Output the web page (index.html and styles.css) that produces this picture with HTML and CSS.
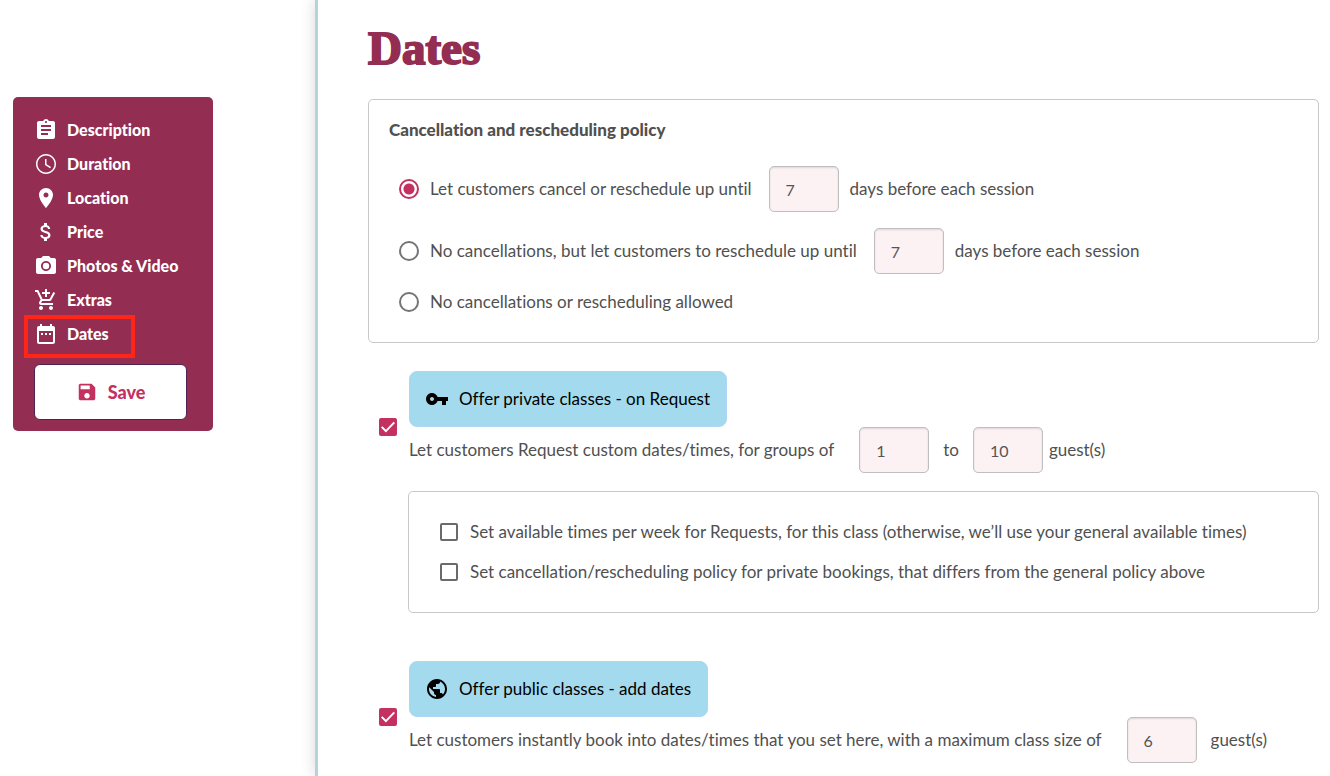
FILE: index.html
```html
<!DOCTYPE html>
<html lang="en">
<head>
    <meta charset="UTF-8">
    <meta name="viewport" content="width=device-width, initial-scale=1.0">
    <title>Dates</title>
    <link rel="stylesheet" href="styles.css">
</head>
<body>
    <aside class="sidebar">
        <nav class="menu">
            <a class="menu-item" href="#description">
                <svg class="icon" viewBox="0 0 24 24"><path d="M19 3h-4.18C14.4 1.84 13.3 1 12 1s-2.4.84-2.82 2H5c-1.1 0-2 .9-2 2v14c0 1.1.9 2 2 2h14c1.1 0 2-.9 2-2V5c0-1.1-.9-2-2-2zm-7 0c.55 0 1 .45 1 1s-.45 1-1 1-1-.45-1-1 .45-1 1-1zm2 14H7v-2h7v2zm3-4H7v-2h10v2zm0-4H7V7h10v2z"/></svg>
                Description
            </a>
            <a class="menu-item" href="#duration">
                <svg class="icon" viewBox="0 0 24 24"><path d="M12 2C6.5 2 2 6.5 2 12s4.5 10 10 10 10-4.5 10-10S17.5 2 12 2zm0 18.5c-4.7 0-8.5-3.8-8.5-8.5S7.3 3.500 12 3.500s8.500 3.800 8.500 8.500-3.800 8.500-8.500 8.500zM12.500 7H11v6l5.200 3.200.8-1.300-4.500-2.700V7z"/></svg>
                Duration
            </a>
            <a class="menu-item" href="#location">
                <svg class="icon" viewBox="0 0 24 24"><path d="M12 2C8.130 2 5 5.130 5 9c0 5.250 7 13 7 13s7-7.750 7-13c0-3.870-3.130-7-7-7zm0 9.500c-1.380 0-2.500-1.120-2.500-2.500s1.120-2.500 2.500-2.500 2.500 1.120 2.500 2.500-1.120 2.500-2.500 2.500z"/></svg>
                Location
            </a>
            <a class="menu-item" href="#price">
                <svg class="icon" viewBox="0 0 24 24"><path d="M11.800 10.900c-2.270-.59-3-1.200-3-2.150 0-1.090 1.010-1.850 2.700-1.850 1.780 0 2.440.85 2.500 2.100h2.210c-.07-1.720-1.120-3.300-3.210-3.810V3h-3v2.160c-1.940.42-3.500 1.680-3.500 3.610 0 2.310 1.910 3.460 4.700 4.130 2.500.6 3 1.480 3 2.410 0 .69-.49 1.790-2.700 1.790-2.060 0-2.870-.92-2.980-2.100h-2.200c.12 2.190 1.760 3.420 3.680 3.830V21h3v-2.150c1.950-.37 3.500-1.500 3.500-3.550 0-2.840-2.430-3.810-4.700-4.400z"/></svg>
                Price
            </a>
            <a class="menu-item" href="#photos">
                <svg class="icon" viewBox="0 0 24 24"><circle cx="12" cy="12" r="3.200"/><path d="M9 2L7.170 4H4c-1.100 0-2 .9-2 2v12c0 1.100.9 2 2 2h16c1.100 0 2-.9 2-2V6c0-1.100-.9-2-2-2h-3.170L15 2H9zm3 15c-2.760 0-5-2.240-5-5s2.240-5 5-5 5 2.240 5 5-2.240 5-5 5z"/></svg>
                Photos &amp; Video
            </a>
            <a class="menu-item" href="#extras">
                <svg class="icon" viewBox="0 0 24 24"><path d="M11 9h2V6h3V4h-3V1h-2v3H8v2h3v3zm-4 9c-1.100 0-1.990.9-1.990 2S5.900 22 7 22s2-.9 2-2-.9-2-2-2zm10 0c-1.100 0-1.990.9-1.990 2s.89 2 1.990 2 2-.9 2-2-.9-2-2-2zm-9.830-3.250l.03-.12.9-1.630h7.450c.75 0 1.410-.41 1.750-1.030l3.860-7.010L19.420 4h-.01l-1.100 2-2.760 5H8.530l-.13-.27L6.160 6l-.95-2-.94-2H1v2h2l3.600 7.590-1.350 2.450c-.16.28-.25.61-.25.96 0 1.100.9 2 2 2h12v-2H7.420c-.13 0-.25-.11-.25-.25z"/></svg>
                Extras
            </a>
            <a class="menu-item current" href="#dates">
                <svg class="icon" viewBox="0 0 24 24"><path d="M9 11H7v2h2v-2zm4 0h-2v2h2v-2zm4 0h-2v2h2v-2zm2-7h-1V2h-2v2H8V2H6v2H5c-1.110 0-1.990.9-1.990 2L3 20c0 1.100.89 2 2 2h14c1.100 0 2-.9 2-2V6c0-1.100-.9-2-2-2zm0 16H5V9h14v11z"/></svg>
                Dates
            </a>
            <button class="save" type="submit" form="datesForm">
                <svg class="icon" viewBox="0 0 24 24"><path d="M17 3H5c-1.110 0-2 .9-2 2v14c0 1.100.89 2 2 2h14c1.100 0 2-.9 2-2V7l-4-4zm-5 16c-1.660 0-3-1.340-3-3s1.340-3 3-3 3 1.340 3 3-1.340 3-3 3zm3-10H5V5h10v4z"/></svg>
                Save
            </button>
        </nav>
    </aside>

    <main>
        <h1>Dates</h1>

        <form id="datesForm">
            <section class="card policy">
                <h2>Cancellation and rescheduling policy</h2>
                <div class="choice">
                    <input type="radio" name="policy" id="policyCancel" checked>
                    <label for="policyCancel">Let customers cancel or reschedule up until</label>
                    <input type="text" class="number" id="cancelDays" value="7" inputmode="numeric" aria-label="Days before session to cancel">
                    <label for="cancelDays">days before each session</label>
                </div>
                <div class="choice">
                    <input type="radio" name="policy" id="policyReschedule">
                    <label for="policyReschedule">No cancellations, but let customers to reschedule up until</label>
                    <input type="text" class="number" id="rescheduleDays" value="7" inputmode="numeric" aria-label="Days before session to reschedule">
                    <label for="rescheduleDays">days before each session</label>
                </div>
                <div class="choice">
                    <input type="radio" name="policy" id="policyNone">
                    <label for="policyNone">No cancellations or rescheduling allowed</label>
                </div>
            </section>

            <section class="offer">
                <input type="checkbox" id="offerPrivate" checked>
                <div class="offer-body">
                    <label class="offer-title" for="offerPrivate">
                        <svg class="icon" viewBox="0 0 24 24"><path d="M12.650 10C11.830 7.670 9.610 6 7 6c-3.310 0-6 2.690-6 6s2.690 6 6 6c2.610 0 4.830-1.670 5.650-4H17v4h4v-4h2v-4H12.650zM7 14c-1.100 0-2-.9-2-2s.9-2 2-2 2 .9 2 2-.9 2-2 2z"/></svg>
                        Offer private classes - on Request
                    </label>
                    <div class="guests">
                        <label for="minGuests">Let customers Request custom dates/times, for groups of</label>
                        <input type="text" class="number" id="minGuests" value="1" inputmode="numeric">
                        <label for="maxGuests">to</label>
                        <input type="text" class="number" id="maxGuests" value="10" inputmode="numeric">
                        <span class="unit">guest(s)</span>
                    </div>
                </div>
            </section>

            <section class="card request-options">
                <div class="choice">
                    <input type="checkbox" id="weeklyTimes">
                    <label for="weeklyTimes">Set available times per week for Requests, for this class (otherwise, we’ll use your general available times)</label>
                </div>
                <div class="choice">
                    <input type="checkbox" id="privatePolicy">
                    <label for="privatePolicy">Set cancellation/rescheduling policy for private bookings, that differs from the general policy above</label>
                </div>
            </section>

            <section class="offer">
                <input type="checkbox" id="offerPublic" checked>
                <div class="offer-body">
                    <label class="offer-title" for="offerPublic">
                        <svg class="icon" viewBox="0 0 24 24"><path d="M12 2C6.480 2 2 6.480 2 12s4.480 10 10 10 10-4.480 10-10S17.520 2 12 2zm-1 17.930c-3.950-.49-7-3.850-7-7.930 0-.62.08-1.210.21-1.790L9 15v1c0 1.100.9 2 2 2v1.930zm6.900-2.540c-.26-.81-1-1.390-1.900-1.390h-1v-3c0-.55-.45-1-1-1H8v-2h2c.55 0 1-.45 1-1V7h2c1.100 0 2-.9 2-2v-.41c2.930 1.190 5 4.060 5 7.410 0 2.080-.8 3.970-2.100 5.390z"/></svg>
                        Offer public classes - add dates
                    </label>
                    <div class="guests">
                        <label for="classSize">Let customers instantly book into dates/times that you set here, with a maximum class size of</label>
                        <input type="text" class="number" id="classSize" value="6" inputmode="numeric">
                        <span>guest(s)</span>
                    </div>
                </div>
            </section>
        </form>
    </main>
</body>
</html>
```

FILE: styles.css
```css
*, *::before, *::after {
    box-sizing: border-box;
}

body {
    margin: 0;
    display: flex;
    min-height: 100vh;
    font-family: Lato, "Liberation Sans", sans-serif;
    font-size: 17px;
    font-variant-ligatures: none;
    line-height: 24px;
    color: #505050;
    background-color: white;
}

.icon {
    width: 24px;
    height: 24px;
    flex-shrink: 0;
    fill: currentColor;
}

.sidebar {
    flex: 0 0 315px;
    padding: 97px 0 0 13px;
}

.menu {
    display: flex;
    flex-direction: column;
    width: 200px;
    padding: 16px 26px 11px 21px;
    border-radius: 5px;
    background-color: #932d52;
}

.menu-item {
    position: relative;
    display: flex;
    align-items: center;
    gap: 9px;
    height: 34px;
    font-size: 16px;
    font-weight: 900;
    white-space: nowrap;
    color: white;
    text-decoration: none;
}

.current::after {
    content: "";
    position: absolute;
    top: -2px;
    left: -10px;
    width: 111px;
    height: 43px;
    border: 4px solid #ff2618;
}

.save {
    display: flex;
    justify-content: center;
    align-items: center;
    gap: 10px;
    height: 56px;
    margin-top: 13px;
    border: 1px solid #4f2452;
    border-radius: 6px;
    background-color: white;
    color: #c4305f;
    font-family: inherit;
    font-size: 18px;
    font-weight: 900;
    cursor: pointer;
}

.save .icon {
    width: 22px;
    height: 22px;
}

main {
    flex: 1;
    min-width: 0;
    padding: 20px 11px 0 50px;
    border-left: 3px solid #b5d3df;
    box-shadow: 0 0 14px rgba(0, 0, 0, 0.16);
}

h1 {
    margin: 0 0 23px;
    font-family: "Liberation Serif", serif;
    font-size: 47px;
    line-height: 56px;
    color: #932d52;
    -webkit-text-stroke: 2px #932d52;
}

h2 {
    margin: 0 0 8px;
    font-size: 17px;
    font-weight: 900;
}

.card {
    display: flex;
    flex-direction: column;
    gap: 16px;
    border: 1px solid #c8c8c8;
    border-radius: 5px;
}

.policy {
    padding: 18px 20px 28px;
    margin-bottom: 28px;
}

.policy .choice {
    padding-left: 10px;
}

.choice {
    display: flex;
    align-items: center;
    gap: 11px;
}

.choice .number {
    margin-left: 6px;
}

.request-options {
    margin: 0 0 48px 40px;
    padding: 28px 31px;
}

.request-options .choice {
    gap: 12px;
}

input[type="radio"], input[type="checkbox"] {
    appearance: none;
    flex-shrink: 0;
    margin: 0;
    cursor: pointer;
}

input[type="radio"] {
    width: 20px;
    height: 20px;
    border: 2px solid #757575;
    border-radius: 50%;
}

input[type="radio"]:checked {
    border-color: #c4305f;
    background: radial-gradient(circle, #c4305f 5px, white 6px);
}

input[type="checkbox"] {
    width: 18px;
    height: 18px;
    border: 2px solid #6b6b6b;
    border-radius: 2px;
}

input[type="checkbox"]:checked {
    display: grid;
    place-items: center;
    border-color: #c4305f;
    background-color: #c4305f;
}

input[type="checkbox"]:checked::after {
    content: "";
    width: 14px;
    height: 12px;
    background-color: white;
    clip-path: polygon(0 55%, 10% 44%, 35% 73%, 90% 6%, 100% 17%, 35% 96%);
}

.number {
    width: 70px;
    height: 46px;
    padding: 0 16px;
    border: 1px solid #bfbfbf;
    border-radius: 5px;
    background-color: #fcf2f4;
    box-shadow: inset 0 1px 2px rgba(0, 0, 0, 0.12);
    font-family: inherit;
    font-size: 16px;
    color: #555;
}

.offer {
    display: flex;
    align-items: center;
    gap: 12px;
    padding-left: 11px;
    margin-bottom: 8px;
}

.offer:last-child {
    margin-bottom: 0;
}

.offer-body {
    display: flex;
    flex-direction: column;
    align-items: flex-start;
    padding-bottom: 10px;
}

.offer-title {
    display: flex;
    align-items: center;
    gap: 10px;
    height: 56px;
    padding: 0 16px 0 15px;
    border: 1px solid #afd5f2;
    border-radius: 8px;
    background-color: #a4daed;
    color: black;
    cursor: pointer;
}

.guests {
    display: flex;
    align-items: center;
    gap: 14px;
}

.guests label:first-child {
    margin-right: 11px;
}

.unit {
    margin-left: -8px;
}
```
